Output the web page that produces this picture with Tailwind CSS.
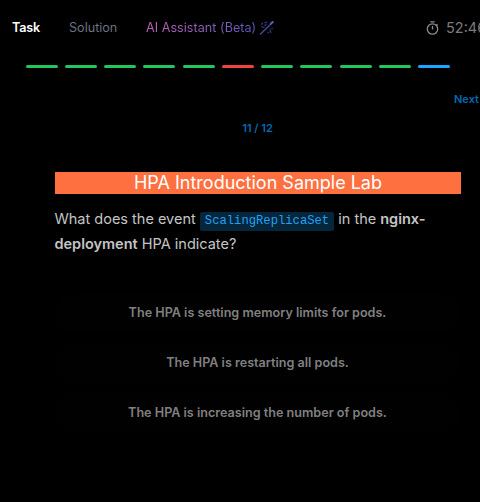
<!DOCTYPE html>
<html lang="en">
<head>
<meta charset="utf-8">
<title>HPA Introduction Sample Lab</title>
<script src="https://cdn.jsdelivr.net/npm/@tailwindcss/browser@4"></script>
</head>
<body class="h-[502px] w-[480px] overflow-hidden bg-black font-['Inter',sans-serif]">
<header class="flex h-[55px] items-center overflow-hidden pl-3 text-[12.6px] whitespace-nowrap">
  <nav class="flex w-[414px] shrink-0 items-center pt-px leading-5">
    <a class="w-[57px] font-semibold tracking-[-0.2px] text-white">Task</a>
    <a class="w-[77px] text-[#6b7280]">Solution</a>
    <a class="flex items-center gap-[3px]">
      <span class="bg-linear-to-r from-[#c061b5] to-[#5a57b8] bg-clip-text tracking-[0.03px] text-transparent">AI Assistant (Beta)</span>
      <svg class="size-4" viewBox="0 0 16 16" fill="none" stroke="#44479a" stroke-linecap="round">
        <path d="M1.5 14 12.5 3.5" stroke-width="1.5"/>
        <path d="M12 3.6 13.8 2" stroke="#5360c8" stroke-width="2"/>
        <path d="M2.5 4.2l1-1M6 2.5h1.5M3 6.8l2 .6M11 10l.8 2.4M13 8.3v.4M9 12.6h.6M7 4.5l-1 1" stroke-width="1.4" opacity=".75"/>
      </svg>
    </a>
  </nav>
  <div class="flex shrink-0 items-center gap-[7px] text-[#7a7a7d]">
    <svg class="h-[14px] w-[13px]" viewBox="0 0 13 14" fill="none" stroke="#8c8c8c" stroke-width="1.3">
      <circle cx="6.5" cy="8" r="5.2"/><path d="M4.3 .8h4.4M6.5 5v3.5M10.5 3.2l1.2 1.2"/>
    </svg>
    <span class="text-[14.5px]">52:46</span>
  </div>
</header>
<div class="mt-[10px] ml-[25.7px] flex h-[3px] w-[424.4px] justify-between">
  <i class="w-8 rounded-full bg-[#22c55e]"></i>
  <i class="w-8 rounded-full bg-[#22c55e]"></i>
  <i class="w-8 rounded-full bg-[#22c55e]"></i>
  <i class="w-8 rounded-full bg-[#22c55e]"></i>
  <i class="w-8 rounded-full bg-[#22c55e]"></i>
  <i class="w-8 rounded-full bg-[#ef4444]"></i>
  <i class="w-8 rounded-full bg-[#22c55e]"></i>
  <i class="w-8 rounded-full bg-[#22c55e]"></i>
  <i class="w-8 rounded-full bg-[#22c55e]"></i>
  <i class="w-8 rounded-full bg-[#22c55e]"></i>
  <i class="w-8 rounded-full bg-[#1aa7ff]"></i>
</div>
<div class="mt-[23px] pl-[454px] text-[11px] leading-4 font-semibold text-[#0069b4]">Next</div>
<div class="mt-[13px] ml-[55px] w-[405px] text-center text-[11px] leading-4 font-semibold text-[#0069b4]">11 / 12</div>
<main class="mt-9 ml-[55px] w-[406px]">
  <h1 class="h-[22px] bg-[#ff7040] text-center text-[18px] leading-[22px] text-white">HPA Introduction Sample Lab</h1>
  <p class="mt-3 -ml-[0.5px] h-[51px] text-[14.5px] leading-[25px] text-[#c5c5c5]">What does the event <code class="rounded-[2px] bg-[#05263b] px-[5px] pt-[2px] pb-[3px] font-['Liberation_Mono',monospace] text-[12.2px] leading-none text-[#1fa3f5]">ScalingReplicaSet</code> in the <strong class="font-semibold">nginx-deployment</strong> HPA indicate?</p>
  <div class="mt-9 -ml-px flex flex-col gap-[10px] text-[12.6px] font-semibold text-[#808080]">
    <button class="h-10 rounded-full bg-[#010101]">The HPA is setting memory limits for pods.</button>
    <button class="h-10 rounded-full bg-[#010101]">The HPA is restarting all pods.</button>
    <button class="h-10 rounded-full bg-[#010101]">The HPA is increasing the number of pods.</button>
  </div>
</main>
</body>
</html>
